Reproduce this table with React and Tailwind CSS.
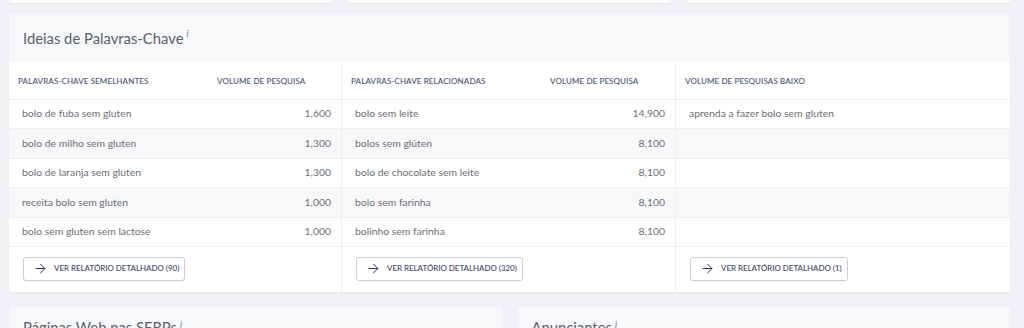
import { ArrowRight } from "lucide-react";

const semelhantes = [
  ["bolo de fuba sem gluten", "1,600"],
  ["bolo de milho sem gluten", "1,300"],
  ["bolo de laranja sem gluten", "1,300"],
  ["receita bolo sem gluten", "1,000"],
  ["bolo sem gluten sem lactose", "1,000"],
];

const relacionadas = [
  ["bolo sem leite", "14,900"],
  ["bolos sem glúten", "8,100"],
  ["bolo de chocolate sem leite", "8,100"],
  ["bolo sem farinha", "8,100"],
  ["bolinho sem farinha", "8,100"],
];

const baixo = [["aprenda a fazer bolo sem gluten"], [], [], [], []];

const Info = () => (
  <sup className="ml-[3px] text-[9px] italic text-[#6b7280] font-normal">i</sup>
);

const ReportButton = ({ count }) => (
  <button className="flex items-center h-[24px] pl-[9px] pr-[5px] gap-[6px] border border-[#c9ccd8] rounded-[3px] bg-white text-[7.9px] font-semibold text-[#4b5270]">
    <ArrowRight size={15} strokeWidth={1.6} className="text-[#2f335c]" />
    <span>VER RELATÓRIO DETALHADO ({count})</span>
  </button>
);

const Column = ({ title, volume, rows, count, last }) => (
  <div className={`flex flex-col ${last ? "" : "border-r border-[#eceef2]"}`}>
    <div className="flex items-center h-[38px] border-b border-[#eef0f3] text-[8px] font-semibold tracking-[0.1px] text-[#536079]">
      <div className="w-[208px] pl-[9px]">{title}</div>
      {volume && <div>VOLUME DE PESQUISA</div>}
    </div>
    {rows.map((r, i) => (
      <div
        key={i}
        className={`flex items-center h-[29.4px] border-b border-[#eef0f3] text-[10.4px] text-[#6b6e75] ${
          i % 2 === 1 ? "bg-[#f8f8fa]" : "bg-white"
        }`}
      >
        <div className="flex-1 pl-[13px]">{r[0]}</div>
        {r[1] && <div className="pr-[10px] text-right">{r[1]}</div>}
      </div>
    ))}
    <div className="h-[45px] pt-[10px] pl-[14px]">
      <ReportButton count={count} />
    </div>
  </div>
);

export default function App() {
  return (
    <div
      className="w-[1024px] h-[328px] overflow-hidden bg-[#eff1f5] pl-[9px] pr-[14px]"
      style={{ fontFamily: "Lato, 'Open Sans', sans-serif" }}
    >
      {/* cards above, only their bottom edge is on screen */}
      <div className="grid grid-cols-3 gap-[16px] h-[3px]">
        <div className="bg-white rounded-b-[3px] shadow-[0_1px_1px_rgba(0,0,0,0.05)]" />
        <div className="bg-white rounded-b-[3px] shadow-[0_1px_1px_rgba(0,0,0,0.05)]" />
        <div className="bg-white rounded-b-[3px] shadow-[0_1px_1px_rgba(0,0,0,0.05)]" />
      </div>

      <div className="mt-[11px] bg-white rounded-[3px] shadow-[0_1px_2px_rgba(0,0,0,0.04)] overflow-hidden">
        <div className="h-[48px] bg-[#f7f8fa] flex items-center pl-[14px] text-[14.8px] text-[#59606d]">
          Ideias de Palavras-Chave
          <Info />
        </div>
        <div className="grid grid-cols-[333px_334px_334px]">
          <Column title="PALAVRAS-CHAVE SEMELHANTES" volume rows={semelhantes} count={90} />
          <Column title="PALAVRAS-CHAVE RELACIONADAS" volume rows={relacionadas} count={320} />
          <Column title="VOLUME DE PESQUISAS BAIXO" rows={baixo} count={1} last />
        </div>
      </div>

      <div className="mt-[15px] grid grid-cols-2 gap-[16px]">
        <div className="h-[40px] bg-[#f7f8fa] rounded-[3px] pl-[14px] pt-[9px] text-[14.8px] text-[#59606d]">
          Páginas Web nas SERPs
          <Info />
        </div>
        <div className="h-[40px] bg-[#f7f8fa] rounded-[3px] pl-[14px] pt-[9px] text-[14.8px] text-[#59606d]">
          Anunciantes
          <Info />
        </div>
      </div>
    </div>
  );
}
